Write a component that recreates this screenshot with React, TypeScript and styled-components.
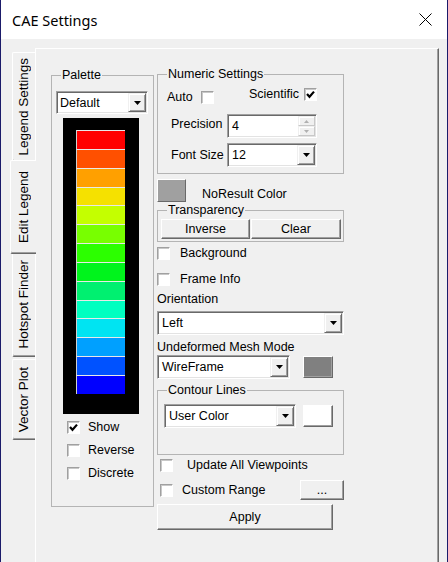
import React from 'react';
import styled, { createGlobalStyle } from 'styled-components';

const Global = createGlobalStyle`
  html, body { margin: 0; padding: 0; background: #f0f0f0; }
  body { font-family: "Liberation Sans", Arial, sans-serif; font-size: 12.5px; color: #000; }
  * { box-sizing: border-box; }
`;

const Window = styled.div`
  width: 448px;
  height: 562px;
  overflow: hidden;
  border-left: 1px solid #1b1b6a;
  border-right: 1px solid #1b1b6a;
  display: flex;
  flex-direction: column;
  background: #f0f0f0;
`;

const TitleBar = styled.div`
  height: 39px;
  flex: none;
  background: #fff;
  display: flex;
  align-items: center;
  justify-content: space-between;
  padding: 0 15px 0 11px;
`;

const Title = styled.div`
  font-family: "Noto Sans", "Open Sans", sans-serif;
  font-size: 14.5px;
  color: #000;
`;

const Body = styled.div`
  flex: 1;
  display: flex;
  align-items: stretch;
  padding: 9px 8px 0 9px;
`;

const TabStrip = styled.div`
  width: 25px;
  flex: none;
  display: flex;
  flex-direction: column;
  padding-top: 4px;
`;

const Tab = styled.div<{ $h: number; $sel?: boolean; $mt?: number }>`
  height: ${p => p.$h}px;
  margin-top: ${p => (p.$sel ? -2 : p.$mt ?? 0)}px;
  margin-bottom: ${p => (p.$sel ? -2 : 0)}px;
  margin-left: ${p => (p.$sel ? 0 : 2)}px;
  width: ${p => (p.$sel ? 26 : 23)}px;
  position: relative;
  z-index: ${p => (p.$sel ? 2 : 0)};
  background: #f0f0f0;
  border-left: 1px solid #fff;
  border-top: 1px solid #fff;
  border-bottom: 1px solid #696969;
  box-shadow: inset 0 -1px 0 #a0a0a0;
  border-radius: 2px 0 0 2px;
  display: flex;
  align-items: center;
  justify-content: center;
`;

const TabText = styled.span`
  writing-mode: vertical-rl;
  transform: rotate(180deg);
  white-space: nowrap;
  font-size: 13.5px;
  line-height: 16px;
`;

const Panel = styled.div`
  flex: 1;
  border-top: 1px solid #fff;
  border-left: 1px solid #fff;
  border-right: 1px solid #696969;
  box-shadow: inset -1px 0 0 #a0a0a0;
  padding: 25px 0 0 15px;
  display: flex;
  align-items: flex-start;
  gap: 3px;
`;

const GroupBox = styled.div<{ $w: number; $h: number; $mt?: number; $pad?: string }>`
  position: relative;
  flex: none;
  width: ${p => p.$w}px;
  height: ${p => p.$h}px;
  margin-top: ${p => p.$mt ?? 0}px;
  padding: ${p => p.$pad ?? '0'};
  border: 1px solid #b4b4b4;
`;

const GroupLegend = styled.span`
  position: absolute;
  top: -8px;
  left: 9px;
  padding: 0 1px;
  line-height: 15px;
  background: #f0f0f0;
  white-space: nowrap;
`;

const Column = styled.div`
  width: 187px;
  flex: none;
  display: flex;
  flex-direction: column;
  align-items: flex-start;
`;

const Row = styled.div<{ $mt?: number; $h?: number; $align?: string; $pl?: number }>`
  display: flex;
  align-items: ${p => p.$align ?? 'center'};
  margin-top: ${p => p.$mt ?? 0}px;
  height: ${p => (p.$h ? `${p.$h}px` : 'auto')};
  padding-left: ${p => p.$pl ?? 0}px;
  align-self: stretch;
`;

const OptionsRow = styled.div`
  display: flex;
  align-items: flex-start;
  justify-content: space-between;
  margin-top: 12px;
  padding: 0 26px 0 9px;
`;

const InlineGroup = styled.div<{ $mt?: number }>`
  display: flex;
  align-items: center;
  height: 14px;
  margin-top: ${p => p.$mt ?? 0}px;
`;

const Label = styled.span<{ $ml?: number; $mt?: number }>`
  margin-left: ${p => p.$ml ?? 0}px;
  margin-top: ${p => p.$mt ?? 0}px;
  line-height: 15px;
  white-space: nowrap;
`;

const CheckBoxBox = styled.span<{ $ml?: number }>`
  width: 13px;
  height: 13px;
  flex: none;
  margin-left: ${p => p.$ml ?? 0}px;
  background: #fff;
  border: 1px solid;
  border-color: #a0a0a0 #fff #fff #a0a0a0;
  box-shadow: inset 1px 1px 0 #c8c8c8;
  display: flex;
  align-items: center;
  justify-content: center;
`;

const Check = ({ on, ml }: { on?: boolean; ml?: number }) => (
  <CheckBoxBox $ml={ml}>
    {on && (
      <svg width="9" height="9" viewBox="0 0 9 9">
        <polyline points="1,4 3.5,6.8 8,1.6" fill="none" stroke="#000" strokeWidth="2.2" />
      </svg>
    )}
  </CheckBoxBox>
);

const Button = styled.button<{ $w: number; $h: number; $bg?: string; $ml?: number; $mt?: number }>`
  width: ${p => p.$w}px;
  height: ${p => p.$h}px;
  flex: none;
  margin: ${p => p.$mt ?? 0}px 0 0 ${p => p.$ml ?? 0}px;
  padding: 0;
  font: inherit;
  color: #000;
  background: ${p => p.$bg ?? '#f0f0f0'};
  border: 1px solid;
  border-color: #fff #696969 #696969 #fff;
  box-shadow: inset -1px -1px 0 #a0a0a0;
  line-height: 14px;
`;

const ComboFrame = styled.div<{ $w: number; $h: number; $mt?: number }>`
  width: ${p => p.$w}px;
  height: ${p => p.$h}px;
  flex: none;
  margin-top: ${p => p.$mt ?? 0}px;
  display: flex;
  align-items: stretch;
  background: #fff;
  border: 1px solid;
  border-color: #a0a0a0 #fff #fff #a0a0a0;
  box-shadow: inset 1px 1px 0 #696969, inset -1px -1px 0 #e3e3e3;
  padding: 1px;
`;

const ComboText = styled.span<{ $pl?: number }>`
  flex: 1;
  display: flex;
  align-items: center;
  padding-left: ${p => p.$pl ?? 3}px;
  white-space: nowrap;
`;

const DropButton = styled.span`
  width: 18px;
  flex: none;
  background: #f0f0f0;
  border: 1px solid;
  border-color: #f0f0f0 #696969 #696969 #f0f0f0;
  box-shadow: inset 1px 1px 0 #fff, inset -1px -1px 0 #a0a0a0;
  display: flex;
  align-items: center;
  justify-content: center;
`;

const Arrow = () => (
  <svg width="7" height="4" viewBox="0 0 7 4">
    <polygon points="0,0 7,0 3.5,4" fill="#000" />
  </svg>
);

const Combo = ({ w, h, value, mt, pl }: { w: number; h: number; value: string; mt?: number; pl?: number }) => (
  <ComboFrame $w={w} $h={h} $mt={mt}>
    <ComboText $pl={pl}>{value}</ComboText>
    <DropButton>
      <Arrow />
    </DropButton>
  </ComboFrame>
);

const SpinButtons = styled.span`
  width: 17px;
  flex: none;
  display: flex;
  flex-direction: column;
`;

const SpinHalf = styled.span`
  flex: 1;
  background: #f0f0f0;
  border: 1px solid;
  border-color: #f0f0f0 #c8c8c8 #c8c8c8 #f0f0f0;
  box-shadow: inset 1px 1px 0 #fff;
  display: flex;
  align-items: center;
  justify-content: center;
`;

const SpinArrow = ({ up }: { up?: boolean }) => (
  <svg width="5" height="3" viewBox="0 0 5 3">
    <polygon points={up ? '0,3 5,3 2.5,0' : '0,0 5,0 2.5,3'} fill="#b0b0b0" />
  </svg>
);

const FormGrid = styled.div`
  display: grid;
  grid-template-columns: 56px 90px;
  row-gap: 5px;
  align-items: center;
  margin-top: 10px;
  padding-left: 13px;
`;

const PaletteInner = styled.div`
  padding: 15px 0 0 4px;
  display: flex;
  flex-direction: column;
  align-items: flex-start;
`;

const ColorBar = styled.div`
  width: 76px;
  height: 296px;
  margin: 4px 0 0 7px;
  background: #000;
  padding: 12px 0 0 13px;
  display: flex;
  flex-direction: column;
`;

const Swatch = styled.div<{ $c: string }>`
  width: 49px;
  height: 18.85px;
  flex: none;
  background: ${p => p.$c};
  border-top: 1px solid #e8e8e8;
  border-left: 1px solid #d0d0d0;
`;

const CheckList = styled.div`
  margin: 6px 0 0 11px;
  display: flex;
  flex-direction: column;
  gap: 8px;
`;

const colors = [
  '#ff0000', '#ff5000', '#ffa000', '#f5e100', '#c4ff00', '#78ff00', '#2cff00',
  '#00f41c', '#00f070', '#00ffc0', '#00e4f2', '#00a0ff', '#0052ff', '#0000ff',
];

const CloseIcon = () => (
  <svg width="13" height="13" viewBox="0 0 13 13">
    <path d="M0.5 0.5 L12.5 12.5 M12.5 0.5 L0.5 12.5" stroke="#000" strokeWidth="1" fill="none" />
  </svg>
);

export default function App() {
  return (
    <>
      <Global />
      <Window>
        <TitleBar>
          <Title>CAE Settings</Title>
          <CloseIcon />
        </TitleBar>
        <Body>
          <TabStrip>
            <Tab $h={110}><TabText>Legend Settings</TabText></Tab>
            <Tab $h={94} $sel><TabText>Edit Legend</TabText></Tab>
            <Tab $h={105}><TabText>Hotspot Finder</TabText></Tab>
            <Tab $h={81} $mt={2}><TabText>Vector Plot</TabText></Tab>
          </TabStrip>
          <Panel>
            <GroupBox $w={103} $h={432} $mt={1}>
              <GroupLegend>Palette</GroupLegend>
              <PaletteInner>
                <Combo w={92} h={23} value="Default" pl={2} />
                <ColorBar>
                  {colors.map(c => (
                    <Swatch key={c} $c={c} />
                  ))}
                </ColorBar>
                <CheckList>
                  <Row $h={15}><Check on /><Label $ml={8}>Show</Label></Row>
                  <Row $h={15}><Check /><Label $ml={8}>Reverse</Label></Row>
                  <Row $h={15}><Check /><Label $ml={8}>Discrete</Label></Row>
                </CheckList>
              </PaletteInner>
            </GroupBox>

            <Column>
              <GroupBox $w={187} $h={100}>
                <GroupLegend>Numeric Settings</GroupLegend>
                <OptionsRow>
                  <InlineGroup $mt={3}>
                    <Label>Auto</Label>
                    <Check ml={8} />
                  </InlineGroup>
                  <InlineGroup>
                    <Label>Scientific</Label>
                    <Check on ml={5} />
                  </InlineGroup>
                </OptionsRow>
                <FormGrid>
                  <Label $mt={-3}>Precision</Label>
                  <ComboFrame $w={90} $h={24}>
                    <ComboText>4</ComboText>
                    <SpinButtons>
                      <SpinHalf><SpinArrow up /></SpinHalf>
                      <SpinHalf><SpinArrow /></SpinHalf>
                    </SpinButtons>
                  </ComboFrame>
                  <Label>Font Size</Label>
                  <Combo w={90} h={24} value="12" />
                </FormGrid>
              </GroupBox>

              <Row $mt={5} $align="flex-end">
                <Button $w={29} $h={23} $bg="#a0a0a0" />
                <Label $ml={16}>NoResult Color</Label>
              </Row>

              <GroupBox $w={187} $h={32} $mt={8} $pad="8px 0 0 3px">
                <GroupLegend>Transparency</GroupLegend>
                <Row>
                  <Button $w={89} $h={20}>Inverse</Button>
                  <Button $w={90} $h={20} $ml={1}>Clear</Button>
                </Row>
              </GroupBox>

              <Row $mt={3} $h={16}>
                <Check />
                <Label $ml={10}>Background</Label>
              </Row>
              <Row $mt={10} $h={16}>
                <Check />
                <Label $ml={10}>Frame Info</Label>
              </Row>

              <Label $mt={5}>Orientation</Label>
              <Combo w={187} h={24} value="Left" mt={4} />

              <Label $mt={5}>Undeformed Mesh Mode</Label>
              <Row>
                <Combo w={133} h={24} value="WireFrame" />
                <Button $w={30} $h={22} $ml={13} $bg="#808080" />
              </Row>

              <GroupBox $w={187} $h={65} $mt={11} $pad="13px 0 0 6px">
                <GroupLegend>Contour Lines</GroupLegend>
                <Row>
                  <Combo w={132} h={24} value="User Color" />
                  <Button $w={30} $h={22} $ml={7} $bg="#ffffff" />
                </Row>
              </GroupBox>

              <Row $mt={2} $h={16} $pl={3}>
                <Check />
                <Label $ml={14}>Update All Viewpoints</Label>
              </Row>
              <Row $mt={7} $h={20} $pl={3}>
                <Check />
                <Label $ml={9}>Custom Range</Label>
                <Button $w={44} $h={20} style={{ marginLeft: 'auto' }}>...</Button>
              </Row>

              <Button $w={176} $h={26} $mt={4}>Apply</Button>
            </Column>
          </Panel>
        </Body>
      </Window>
    </>
  );
}
